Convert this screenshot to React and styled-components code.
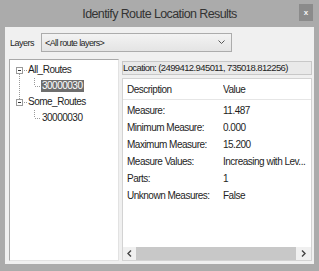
import React from "react";
import styled, { createGlobalStyle } from "styled-components";

const GlobalStyle = createGlobalStyle`
  html, body {
    margin: 0;
    padding: 0;
    background: #ababab;
  }
  * {
    box-sizing: border-box;
  }
`;

const font = `"Liberation Sans", Arial, sans-serif`;

const Window = styled.div`
  width: 319px;
  height: 271px;
  background: #ababab;
  display: flex;
  flex-direction: column;
  font-family: ${font};
  color: #1e1e1e;
`;

const TitleBar = styled.div`
  height: 27px;
  flex-shrink: 0;
  display: grid;
  grid-template-columns: 1fr auto 1fr;
  align-items: center;
`;

const Title = styled.div`
  grid-column: 2;
  font-size: 12.5px;
  letter-spacing: -0.6px;
  color: #333;
`;

const CloseButton = styled.button`
  grid-column: 3;
  justify-self: end;
  align-self: start;
  margin: 4px 6px 0 0;
  width: 14px;
  height: 17px;
  padding: 0;
  border: 0;
  background: #8b8b8b;
  color: #f4f4f4;
  font-family: ${font};
  font-size: 8px;
  font-weight: bold;
  line-height: 17px;
`;

const Client = styled.div`
  margin: 0 5px;
  height: 237px;
  background: #f0f0f0;
  display: flex;
  flex-direction: column;
`;

const LayersRow = styled.div`
  display: flex;
  align-items: center;
  margin-top: 6px;
  height: 19px;
`;

const Label = styled.span`
  width: 36px;
  padding-left: 5px;
  font-size: 9px;
  letter-spacing: -0.5px;
`;

const Dropdown = styled.div`
  width: 191px;
  height: 19px;
  border: 1px solid #acacac;
  background: linear-gradient(#f3f3f3, #e4e4e4);
  display: flex;
  align-items: center;
  justify-content: space-between;
  padding: 0 6px 0 3px;
  font-size: 9px;
  letter-spacing: -0.6px;
`;

const Body = styled.div`
  display: flex;
  margin-top: 7px;
  height: 202px;
  padding: 0 2px 0 4px;
`;

const TreePane = styled.div`
  width: 110px;
  flex-shrink: 0;
  background: #fff;
  border: 1px solid;
  border-color: #a9a9a9 #e2e2e2 #e2e2e2 #a9a9a9;
  padding-top: 2px;
  font-size: 10px;
  letter-spacing: -0.5px;
`;

const TreeRow = styled.div`
  display: flex;
  align-items: center;
  height: 16px;
`;

const NodeText = styled.span`
  height: 12px;
  line-height: 12px;
  padding: 0 1px;
  background: ${(p) => (p.$selected ? "#6e6e6e" : "transparent")};
  color: ${(p) => (p.$selected ? "#fff" : "#1e1e1e")};
`;

const RightPane = styled.div`
  flex: 1;
  min-width: 0;
  margin-left: 3px;
  display: flex;
  flex-direction: column;
`;

const LocationBox = styled.div`
  margin-top: 2px;
  height: 14px;
  border: 1px solid #c8c8c8;
  background: #e9e9e9;
  font-size: 9.5px;
  letter-spacing: -0.6px;
  line-height: 12px;
  white-space: nowrap;
  overflow: hidden;
`;

const ListBox = styled.div`
  flex: 1;
  margin-top: 3px;
  background: #fff;
  border: 1px solid #d3d3d3;
  display: flex;
  flex-direction: column;
  font-size: 10px;
  letter-spacing: -0.5px;
`;

const HeaderRow = styled.div`
  display: flex;
  align-items: center;
  height: 21px;
  border-bottom: 1px solid #e6e6e6;
  margin-bottom: 2px;
`;

const Row = styled.div`
  display: flex;
  align-items: center;
  height: 17px;
`;

const NameCell = styled.div`
  width: 100px;
  flex-shrink: 0;
  padding-left: 4px;
  white-space: nowrap;
`;

const ValueCell = styled.div`
  flex: 1;
  min-width: 0;
  white-space: nowrap;
  overflow: hidden;
`;

const Spacer = styled.div`
  flex: 1;
`;

const ScrollBar = styled.div`
  display: flex;
  height: 13px;
  background: #f0f0f0;
`;

const ArrowButton = styled.div`
  width: ${(p) => p.$w}px;
  display: flex;
  align-items: center;
  justify-content: center;
`;

const Thumb = styled.div`
  flex: 1;
  background: #c8c8c8;
`;

const dot = { stroke: "#9a9a9a", strokeWidth: 1, strokeDasharray: "1 1", fill: "none" };

function RootGutter({ down, up }) {
  return (
    <svg width="17" height="16" style={{ flexShrink: 0 }}>
      {up && <line x1="9.5" y1="0" x2="9.5" y2="5" {...dot} />}
      {down && <line x1="9.5" y1="12" x2="9.5" y2="16" {...dot} />}
      <line x1="12" y1="8.5" x2="17" y2="8.5" {...dot} />
      <rect x="6.5" y="5.5" width="6" height="6" fill="#fff" stroke="#9a9a9a" />
      <line x1="8" y1="8.5" x2="11" y2="8.5" stroke="#333" />
    </svg>
  );
}

function ChildGutter({ through }) {
  return (
    <svg width="31" height="16" style={{ flexShrink: 0 }}>
      {through && <line x1="9.5" y1="0" x2="9.5" y2="16" {...dot} />}
      <line x1="24.5" y1="0" x2="24.5" y2="8" {...dot} />
      <line x1="25" y1="8.5" x2="31" y2="8.5" {...dot} />
    </svg>
  );
}

const rows = [
  ["Measure:", "11.487"],
  ["Minimum Measure:", "0.000"],
  ["Maximum Measure:", "15.200"],
  ["Measure Values:", "Increasing with Lev..."],
  ["Parts:", "1"],
  ["Unknown Measures:", "False"],
];

export default function App() {
  return (
    <>
      <GlobalStyle />
      <Window>
        <TitleBar>
          <Title>Identify Route Location Results</Title>
          <CloseButton>x</CloseButton>
        </TitleBar>
        <Client>
          <LayersRow>
            <Label>Layers</Label>
            <Dropdown>
              <span>&lt;All route layers&gt;</span>
              <svg width="7" height="5" viewBox="0 0 7 5">
                <path d="M0.5 0.5 L3.5 3.5 L6.5 0.5" stroke="#555" fill="none" />
              </svg>
            </Dropdown>
          </LayersRow>
          <Body>
            <TreePane>
              <TreeRow>
                <RootGutter down />
                <NodeText>All_Routes</NodeText>
              </TreeRow>
              <TreeRow>
                <ChildGutter through />
                <NodeText $selected>30000030</NodeText>
              </TreeRow>
              <TreeRow>
                <RootGutter up />
                <NodeText>Some_Routes</NodeText>
              </TreeRow>
              <TreeRow>
                <ChildGutter />
                <NodeText>30000030</NodeText>
              </TreeRow>
            </TreePane>
            <RightPane>
              <LocationBox>Location: (2499412.945011, 735018.812256)</LocationBox>
              <ListBox>
                <HeaderRow>
                  <NameCell>Description</NameCell>
                  <ValueCell>Value</ValueCell>
                </HeaderRow>
                {rows.map(([name, value]) => (
                  <Row key={name}>
                    <NameCell>{name}</NameCell>
                    <ValueCell>{value}</ValueCell>
                  </Row>
                ))}
                <Spacer />
                <ScrollBar>
                  <ArrowButton $w={13}>
                    <svg width="5" height="7" viewBox="0 0 5 7">
                      <path d="M4 0.5 L1 3.5 L4 6.5" stroke="#444" strokeWidth="1.4" fill="none" />
                    </svg>
                  </ArrowButton>
                  <Thumb />
                  <ArrowButton $w={15}>
                    <svg width="5" height="7" viewBox="0 0 5 7">
                      <path d="M1 0.5 L4 3.5 L1 6.5" stroke="#444" strokeWidth="1.4" fill="none" />
                    </svg>
                  </ArrowButton>
                </ScrollBar>
              </ListBox>
            </RightPane>
          </Body>
        </Client>
      </Window>
    </>
  );
}
